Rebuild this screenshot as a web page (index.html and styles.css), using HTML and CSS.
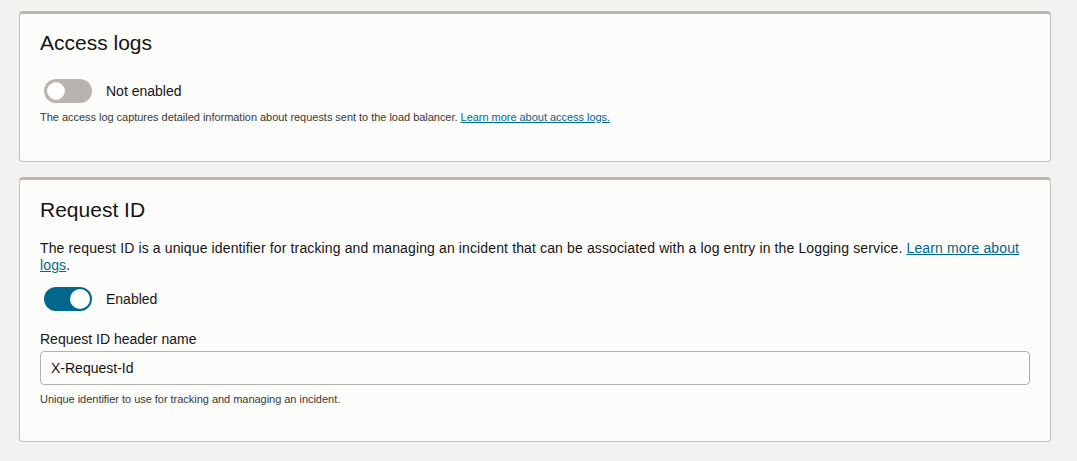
FILE: index.html
```html
<!DOCTYPE html>
<html lang="en">
<head>
<meta charset="utf-8">
<title>Load balancer logging</title>
<link rel="stylesheet" href="styles.css">
</head>
<body>
<main class="page">
  <section class="card card-access">
    <h2 class="card-title">Access logs</h2>
    <div class="switch-row">
      <span class="switch switch-off" role="switch" aria-checked="false"><span class="knob"></span></span>
      <span class="switch-label">Not enabled</span>
    </div>
    <p class="help">The access log captures detailed information about requests sent to the load balancer. <a href="#" class="link">Learn more about access logs.</a></p>
  </section>

  <section class="card card-request">
    <h2 class="card-title title-request">Request ID</h2>
    <p class="desc">The request ID is a unique identifier for tracking and managing an incident that can be associated with a log entry in the Logging service. <a href="#" class="link">Learn more about logs</a>.</p>
    <div class="switch-row switch-row-request">
      <span class="switch switch-on" role="switch" aria-checked="true"><span class="knob"></span></span>
      <span class="switch-label">Enabled</span>
    </div>
    <label class="field-label" for="hdr">Request ID header name</label>
    <input id="hdr" class="text-input" type="text" value="X-Request-Id">
    <p class="help help-field">Unique identifier to use for tracking and managing an incident.</p>
  </section>
</main>
</body>
</html>
```

FILE: styles.css
```css
* { box-sizing: border-box; }

html, body {
  margin: 0;
  padding: 0;
  background: #f3f2f1;
}

body {
  font-family: "Liberation Sans", Arial, sans-serif;
  color: #161513;
}

.page {
  display: flex;
  flex-direction: column;
  gap: 15px;
  padding: 11px 26px 0 19px;
}

.card {
  background: #fcfcfb;
  border: 1px solid #c4c0bb;
  border-top: 3px solid #bcb6b0;
  border-radius: 4px;
  padding: 16px 20px 37px 20px;
  display: flex;
  flex-direction: column;
  align-items: flex-start;
}

.card-request {
  padding-top: 17px;
  padding-bottom: 35px;
}

.card-title {
  margin: 0 0 24px 0;
  font-size: 21px;
  font-weight: normal;
  line-height: 25px;
}

.title-request {
  margin-bottom: 18px;
}

.switch-row {
  display: flex;
  align-items: center;
  gap: 14px;
  height: 24px;
  padding-left: 4px;
}

.switch-row-request {
  margin-top: 13px;
}

.switch {
  position: relative;
  display: inline-block;
  width: 48px;
  height: 24px;
  border-radius: 12px;
  flex: none;
}

.switch-off { background: #bab4ae; }
.switch-on { background: #00688c; }

.knob {
  position: absolute;
  top: 2px;
  width: 20px;
  height: 20px;
  border-radius: 50%;
  background: #ffffff;
}

.switch-off .knob {
  left: 2px;
  box-shadow: 0 0 0 1px #a8a29c inset;
}

.switch-on .knob { right: 2px; }

.switch-label {
  font-size: 14px;
  line-height: 17px;
}

.help {
  margin: 8px 0 0 0;
  font-size: 11px;
  line-height: 13px;
  color: #3a3936;
  letter-spacing: -0.03px;
}

.help-field { margin-top: 8px; }

.link {
  color: #00688c;
  text-decoration: underline;
}

.desc {
  margin: 0;
  font-size: 14px;
  line-height: 17px;
  letter-spacing: 0.13px;
}

.field-label {
  margin-top: 20px;
  font-size: 14px;
  line-height: 17px;
}

.text-input {
  margin-top: 3px;
  width: 100%;
  height: 34px;
  border: 1px solid #b5b1ac;
  border-radius: 4px;
  background: #fcfcfb;
  padding: 0 10px;
  font-family: "Liberation Sans", Arial, sans-serif;
  font-size: 14px;
  color: #161513;
  outline: none;
}
```
